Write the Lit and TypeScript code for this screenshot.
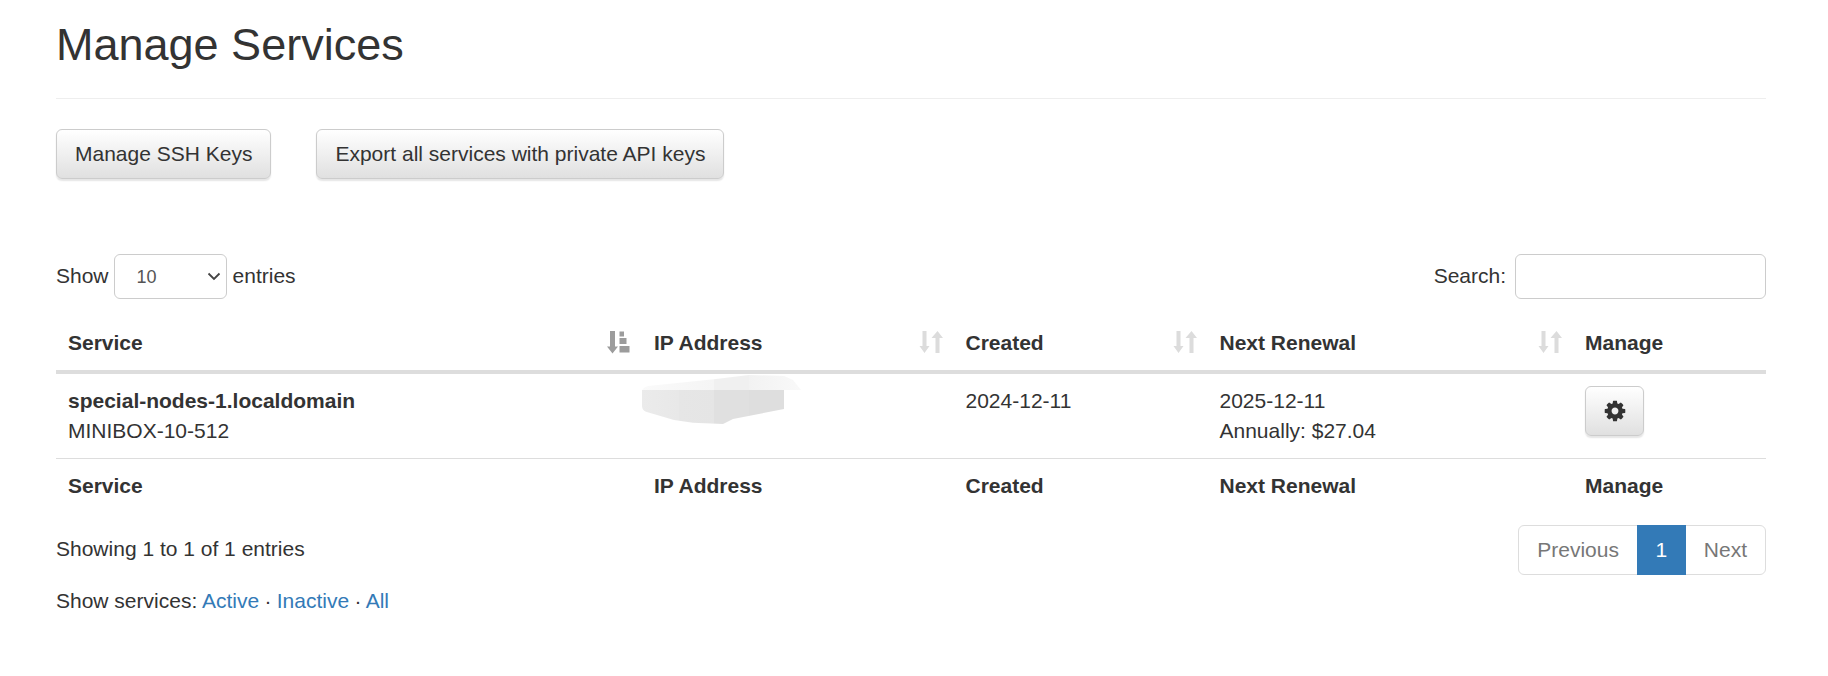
import { LitElement, html, css, svg } from "lit";
import { customElement } from "lit/decorators.js";

const cog = "M1152 896q0-106-75-181t-181-75-181 75-75 181 75 181 181 75 181-75 75-181zm512-109v222q0 12-8 23t-20 13l-185 28q-19 54-39 91 35 50 107 138 10 12 10 25t-9 23q-27 37-99 108t-94 71q-12 0-26-9l-138-108q-44 23-91 38-16 136-29 186-7 28-36 28h-222q-14 0-24.5-8.5t-11.5-21.5l-28-184q-49-16-90-37l-141 107q-10 9-25 9-14 0-25-11-126-114-165-168-7-10-7-23 0-12 8-23 15-21 51-66.5t54-70.5q-27-50-41-99l-183-27q-13-2-21-12.5t-8-23.5v-222q0-12 8-23t19-13l186-28q14-46 39-92-40-57-107-138-10-12-10-24 0-10 9-23 26-36 98.5-107.5t94.5-71.5q13 0 26 10l138 107q44-23 91-38 16-136 29-186 7-28 36-28h222q14 0 24.5 8.5t11.5 21.5l28 184q49 16 90 37l142-107q9-9 24-9 13 0 25 10 129 119 165 170 7 8 7 22 0 12-8 23-15 21-51 66.5t-54 70.5q26 50 41 98l183 28q13 2 21 12.5t8 23.5z";

const sortBoth = svg`<path d="M3.500 0h4v15h3L5.500 22 .5 15h3zM16.500 22V7h-4L18.500 0l5.500 7h-3.500v15z" fill="#dcdcdc"/>`;
const sortAsc = svg`<path d="M3 0h5v15.500h3L5.500 22.500 0 15.500h3z" fill="#9c9c9c"/><path d="M12.500 0.500h4.500v5h-4.500zM12.500 7h7v6h-7zM12.500 15h10v6.500h-10z" fill="#9c9c9c"/>`;

@customElement("app-root")
export class AppRoot extends LitElement {
  static styles = css`
    :host { display: block; background: #fff; color: #333; font: 21px/30px "Liberation Sans", Arial, sans-serif; padding: 0 62px 0 56px; min-height: 676px; box-sizing: border-box; }
    * { box-sizing: border-box; }
    .header { height: 99px; padding-top: 16px; border-bottom: 1px solid #eee; }
    h1 { margin: 0; font-size: 45px; font-weight: 400; line-height: 58px; }
    .actions { display: flex; gap: 45px; margin-top: 30px; }
    .btn { display: inline-flex; align-items: center; justify-content: center; height: 50px; padding: 0 18px; font: inherit; color: #333; border: 1px solid #ccc; border-radius: 6px; background: linear-gradient(#fff, #e0e0e0); box-shadow: inset 0 1.500px 0 rgba(255,255,255,.15), 0 1.500px 1.500px rgba(0,0,0,.1); }
    .gear { width: 59px; padding: 0; vertical-align: top; }
    .gear svg { width: 24px; height: 24px; fill: #333; }
    .controls { display: flex; justify-content: space-between; align-items: center; margin-top: 75px; height: 45px; }
    .length, .filter { display: flex; align-items: center; gap: 5px; }
    .filter { gap: 9px; }
    .cap { margin-top: -2px; }
    select { appearance: none; width: 113px; height: 45px; margin-right: 1px; padding: 0 9px 0 22px; font: 18px "Liberation Sans", Arial, sans-serif; color: #555; border: 1px solid #ccc; border-radius: 6px;
      background: #fff url("data:image/svg+xml,%3Csvg xmlns='http://www.w3.org/2000/svg' width='14' height='9'%3E%3Cpath d='M1.500 1.500 7 7l5.500-5.500' fill='none' stroke='%23444' stroke-width='1.800'/%3E%3C/svg%3E") no-repeat right 5px center; }
    input { width: 251px; height: 45px; border: 1px solid #ccc; border-radius: 6px; background: #fff; padding: 0 12px; font: inherit; }
    table { width: 100%; margin-top: 17px; border-collapse: collapse; table-layout: fixed; }
    .c1 { width: 586px; } .c2 { width: 311.500px; } .c3 { width: 254px; } .c4 { width: 365.500px; } .c5 { width: auto; }
    th, td { padding: 12px; text-align: left; vertical-align: top; }
    th { font-weight: 700; }
    thead th { border-bottom: 4px solid #ddd; position: relative; }
    tbody td { border-bottom: 1px solid #ddd; position: relative; }
    .sort { position: absolute; right: 11px; top: 15px; width: 24px; height: 23px; }
    .blur { position: absolute; left: 0; top: 1px; width: 160px; height: 50px; }
    .meta { display: flex; justify-content: space-between; align-items: flex-start; margin-top: 12px; }
    .info { padding-top: 9px; }
    .pager { display: flex; height: 50px; border: 1px solid #ddd; border-radius: 6px; color: #777; }
    .pager span { display: flex; align-items: center; padding: 0 18px; }
    .pager .on { background: #337ab7; color: #fff; margin: -1px 0; padding: 0 18.600px; }
    .links { margin-top: 11px; }
    .sep { margin: 0 -0.500px; }
    a { color: #337ab7; text-decoration: none; }
  `;

  private head(sort: boolean) {
    const cols = ["Service", "IP Address", "Created", "Next Renewal", "Manage"];
    return cols.map((c, i) => html`<th>${c}${sort && i < 4
      ? html`<svg class="sort" viewBox="0 0 24 23">${i === 0 ? sortAsc : sortBoth}</svg>` : ""}</th>`);
  }

  render() {
    return html`
      <div class="header"><h1>Manage Services</h1></div>
      <div class="actions">
        <span class="btn">Manage SSH Keys</span>
        <span class="btn">Export all services with private API keys</span>
      </div>
      <div class="controls">
        <label class="length"><span class="cap">Show</span> <select><option>10</option><option>25</option></select> <span class="cap">entries</span></label>
        <label class="filter"><span class="cap">Search:</span> <input type="search" /></label>
      </div>
      <table>
        <colgroup><col class="c1" /><col class="c2" /><col class="c3" /><col class="c4" /><col class="c5" /></colgroup>
        <thead><tr>${this.head(true)}</tr></thead>
        <tbody><tr>
          <td><b>special-nodes-1.localdomain</b><br />MINIBOX-10-512</td>
          <td><svg class="blur" viewBox="0 0 160 50">
            <defs>
              <linearGradient id="band" x1="0" x2="1" y1="0" y2="0">
                <stop offset="0" stop-color="#fafafa"/><stop offset=".45" stop-color="#f5f5f5"/>
                <stop offset=".45" stop-color="#f0f0f0"/><stop offset=".67" stop-color="#f0f0f0"/>
                <stop offset=".67" stop-color="#f2f2f2"/><stop offset="1" stop-color="#f9f9f9"/>
              </linearGradient>
              <linearGradient id="body" gradientUnits="userSpaceOnUse" x1="0" x2="142" y1="0" y2="0">
                <stop offset="0" stop-color="#ebebeb"/><stop offset=".26" stop-color="#e8e8e8"/>
                <stop offset=".26" stop-color="#e6e6e6"/><stop offset=".507" stop-color="#e5e5e5"/>
                <stop offset=".507" stop-color="#e0e0e0"/><stop offset=".754" stop-color="#e0e0e0"/>
                <stop offset=".754" stop-color="#dedede"/><stop offset="1" stop-color="#dedede"/>
              </linearGradient>
            </defs>
            <path d="M0 15Q2 12 6 11L72 4.300 107 0 142 1 151 5 159 15z" fill="url(#band)"/>
            <path d="M0 15H142V34L91 44 81 49 51 47.700 32 45 4 36.700Q0 35 0 31z" fill="url(#body)"/>
          </svg></td>
          <td>2024-12-11</td>
          <td>2025-12-11<br />Annually: $27.04</td>
          <td><span class="btn gear"><svg viewBox="0 0 1792 1792"><path d="${cog}"/></svg></span></td>
        </tr></tbody>
        <tfoot><tr>${this.head(false)}</tr></tfoot>
      </table>
      <div class="meta">
        <div class="info">Showing 1 to 1 of 1 entries</div>
        <div class="pager"><span>Previous</span><span class="on">1</span><span>Next</span></div>
      </div>
      <div class="links">Show services: <a href="#">Active</a> <span class="sep">·</span> <a href="#">Inactive</a> <span class="sep">·</span> <a href="#">All</a></div>
    `;
  }
}
